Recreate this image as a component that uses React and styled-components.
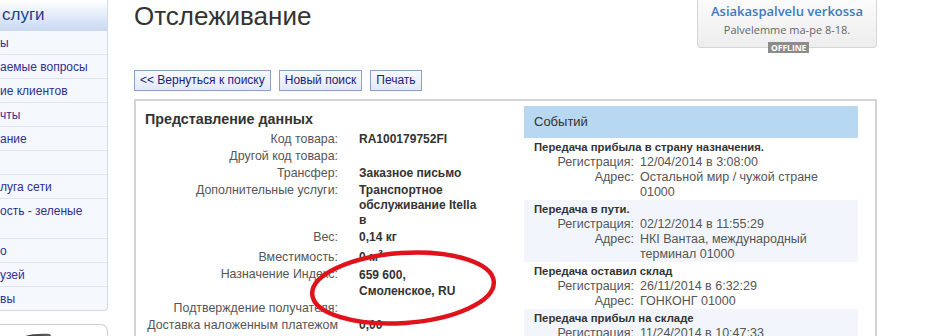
import React from 'react'
import styled, { createGlobalStyle } from 'styled-components'

const GlobalStyle = createGlobalStyle`
  html, body {
    margin: 0;
    padding: 0;
    background: #fff;
  }
  body {
    width: 943px;
    height: 336px;
    overflow: hidden;
    font-family: "Liberation Sans", Arial, sans-serif;
  }
`

const Page = styled.div`
  position: relative;
  display: flex;
  align-items: flex-start;
  width: 943px;
  height: 336px;
  overflow: hidden;
`

const SideColumn = styled.div`
  width: 108px;
  flex-shrink: 0;
  display: flex;
  flex-direction: column;
  gap: 13px;
`

const Menu = styled.div`
  background: #f5f8fd;
  border-right: 1px solid #d3dae6;
  border-bottom: 1px solid #d3dae6;
  border-bottom-right-radius: 4px;
`

const MenuHead = styled.div`
  height: 30px;
  line-height: 30px;
  padding-left: 2px;
  font-size: 17px;
  color: #1d3f8f;
  background: linear-gradient(#ffffff, #c9daf3);
  border-bottom: 1px solid #d3dae6;
`

const MenuItem = styled.div`
  min-height: 16px;
  line-height: 16px;
  padding: 4px 0 3px;
  font-size: 12px;
  color: #2f2f8f;
  white-space: pre;
  border-bottom: 1px solid #dde3ec;
  &:last-child {
    border-bottom: none;
  }
`

const PromoBox = styled.div`
  height: 40px;
  border: 1px solid #cfcfcf;
  border-left: none;
  border-top-right-radius: 7px;
  padding: 5px 0 0 10px;
`

const Main = styled.div`
  margin-left: 26px;
  width: 743px;
  display: flex;
  flex-direction: column;
`

const HeaderRow = styled.div`
  display: flex;
  justify-content: space-between;
  align-items: flex-start;
  height: 48px;
`

const Title = styled.h1`
  margin: 0;
  font-size: 26px;
  line-height: 32px;
  font-weight: normal;
  color: #333;
`

const Chat = styled.div`
  position: relative;
  width: 178px;
  height: 47px;
  border: 1px solid #d6d6d6;
  border-top: none;
  border-radius: 0 0 4px 4px;
  background: linear-gradient(#fbfbfb, #ededed);
  display: flex;
  flex-direction: column;
  align-items: center;
  font-family: "Open Sans", "Noto Sans", sans-serif;
`

const ChatTitle = styled.div`
  margin-top: 2px;
  font-size: 13px;
  font-weight: 600;
  line-height: 18px;
  color: #3a7bbf;
`

const ChatHours = styled.div`
  margin-top: 2px;
  font-size: 11px;
  line-height: 15px;
  color: #666;
`

const OfflineBadge = styled.span`
  position: absolute;
  left: 70px;
  bottom: -6px;
  padding: 0 3px;
  height: 11px;
  line-height: 11px;
  background: #8c8c8c;
  color: #fff;
  font-size: 8.5px;
  font-weight: 700;
`

const ButtonRow = styled.div`
  display: flex;
  gap: 8px;
  margin-top: 22px;
`

const Button = styled.button`
  height: 21px;
  padding: 0 5px;
  border: 1px solid #8aa2c8;
  background: linear-gradient(#f7f9fe, #e2e9f7);
  color: #1c237a;
  font-family: "Liberation Sans", Arial, sans-serif;
  font-size: 12px;
  line-height: 19px;
  cursor: pointer;
`

const Box = styled.div`
  position: relative;
  display: flex;
  align-items: flex-start;
  margin-top: 8px;
  height: 260px;
  border: 2px solid #d4d4d4;
  border-bottom: none;
`

const DetailsColumn = styled.div`
  box-sizing: border-box;
  width: 388px;
  padding: 10px 0 0 9px;
`

const SectionTitle = styled.div`
  font-size: 14.3px;
  font-weight: 700;
  line-height: 17px;
  color: #333;
  margin-bottom: 4px;
`

const DataGrid = styled.div`
  display: grid;
  grid-template-columns: 193px 125px;
  column-gap: 21px;
  row-gap: 2px;
  font-size: 12px;
  line-height: 15px;
`

const DataLabel = styled.div`
  margin-top: ${(p) => p.$top || 0}px;
  text-align: right;
  font-size: 12.4px;
  color: #555;
  white-space: nowrap;
`

const DataValue = styled.div`
  margin-top: ${(p) => p.$top || 0}px;
  line-height: ${(p) => p.$lh || 15}px;
  font-weight: 700;
  color: #333;
`

const Sup = styled.sup`
  font-size: 9px;
  line-height: 0;
`

const EventsColumn = styled.div`
  width: 334px;
  margin-top: 5px;
`

const EventsHead = styled.div`
  height: 32px;
  line-height: 32px;
  padding-left: 10px;
  background: #b8d7f1;
  font-size: 13px;
  color: #333;
`

const EventBlock = styled.div`
  padding: 2px 0 0;
  background: ${(p) => (p.$shade ? '#f2f6fc' : '#fff')};
  font-size: 12.5px;
  line-height: 15px;
  color: #555;
`

const EventTitle = styled.div`
  padding-left: 10px;
  font-size: 11.3px;
  font-weight: 700;
  color: #333;
`

const EventRow = styled.div`
  display: flex;
  gap: 6px;
`

const EventLabel = styled.div`
  width: 110px;
  flex-shrink: 0;
  text-align: right;
`

const EventValue = styled.div`
  width: 190px;
`

const Scribble = styled.svg`
  position: absolute;
  left: 305px;
  top: 248px;
  pointer-events: none;
`

const menu = [
  'ы',
  'аемые вопросы',
  'ие клиентов',
  'чты',
  'ание',
  ' ',
  'луга сети',
  'ость - зеленые\n ',
  'о',
  'узей',
  'вы',
]

const details = [
  { label: 'Код товара:', value: 'RA100179752FI' },
  { label: 'Другой код товара:', value: '' },
  { label: 'Трансфер:', value: 'Заказное письмо' },
  { label: 'Дополнительные услуги:', value: 'Транспортное обслуживание Itella в' },
  { label: 'Вес:', value: '0,14 кг' },
  { label: 'Вместимость:', value: <>0 м<Sup>3</Sup></>, top: 3 },
  { label: 'Назначение Индекс:', value: <>659 600,<br />Смоленское, RU</>, lh: 16 },
  { label: 'Подтверждение получателя:', value: '' },
  { label: 'Доставка наложенным платежом', value: '0,00' },
]

const events = [
  {
    title: 'Передача прибыла в страну назначения.',
    date: '12/04/2014 в 3:08:00',
    address: 'Остальной мир / чужой стране 01000',
  },
  {
    title: 'Передача в пути.',
    date: '02/12/2014 в 11:55:29',
    address: 'НКI Вантаа, международный терминал 01000',
  },
  {
    title: 'Передача оставил склад',
    date: '26/11/2014 в 6:32:29',
    address: 'ГОНКОНГ 01000',
  },
  {
    title: 'Передача прибыл на складе',
    date: '11/24/2014 в 10:47:33',
    address: 'ГОНКОНГ 01000',
  },
]

const App = () => {
  return (
    <Page>
      <GlobalStyle />
      <SideColumn>
        <Menu>
          <MenuHead>слуги</MenuHead>
          {menu.map((item, i) => (
            <MenuItem key={i}>{item}</MenuItem>
          ))}
        </Menu>
        <PromoBox>
          <svg width="48" height="12" viewBox="0 0 48 12">
            <defs>
              <linearGradient id="dev" x1="0" x2="1" y1="0" y2="0">
                <stop offset="0" stopColor="#9a9a9a" />
                <stop offset="0.4" stopColor="#3a3a3a" />
                <stop offset="1" stopColor="#6e6e6e" />
              </linearGradient>
            </defs>
            <path d="M2 12 C 8 4, 22 1, 40 2 L 46 12 Z" fill="url(#dev)" />
          </svg>
        </PromoBox>
      </SideColumn>

      <Main>
        <HeaderRow>
          <Title>Отслеживание</Title>
          <Chat>
            <ChatTitle>Asiakaspalvelu verkossa</ChatTitle>
            <ChatHours>Palvelemme ma-pe 8-18.</ChatHours>
            <OfflineBadge>OFFLINE</OfflineBadge>
          </Chat>
        </HeaderRow>

        <ButtonRow>
          <Button>&lt;&lt; Вернуться к поиску</Button>
          <Button>Новый поиск</Button>
          <Button>Печать</Button>
        </ButtonRow>

        <Box>
          <DetailsColumn>
            <SectionTitle>Представление данных</SectionTitle>
            <DataGrid>
              {details.map((row) => (
                <React.Fragment key={row.label}>
                  <DataLabel $top={row.top}>{row.label}</DataLabel>
                  <DataValue $top={row.top} $lh={row.lh}>{row.value}</DataValue>
                </React.Fragment>
              ))}
            </DataGrid>
          </DetailsColumn>

          <EventsColumn>
            <EventsHead>Событий</EventsHead>
            {events.map((ev, i) => (
              <EventBlock key={i} $shade={i % 2 === 1}>
                <EventTitle>{ev.title}</EventTitle>
                <EventRow>
                  <EventLabel>Регистрация:</EventLabel>
                  <EventValue>{ev.date}</EventValue>
                </EventRow>
                <EventRow>
                  <EventLabel>Адрес:</EventLabel>
                  <EventValue>{ev.address}</EventValue>
                </EventRow>
              </EventBlock>
            ))}
          </EventsColumn>
        </Box>
      </Main>

      <Scribble width="200" height="88" viewBox="0 0 200 88">
        <ellipse
          cx="98"
          cy="40"
          rx="91"
          ry="35"
          fill="none"
          stroke="#e0121c"
          strokeWidth="4.5"
          transform="rotate(-4 98 40)"
        />
      </Scribble>
    </Page>
  )
}

export default App
